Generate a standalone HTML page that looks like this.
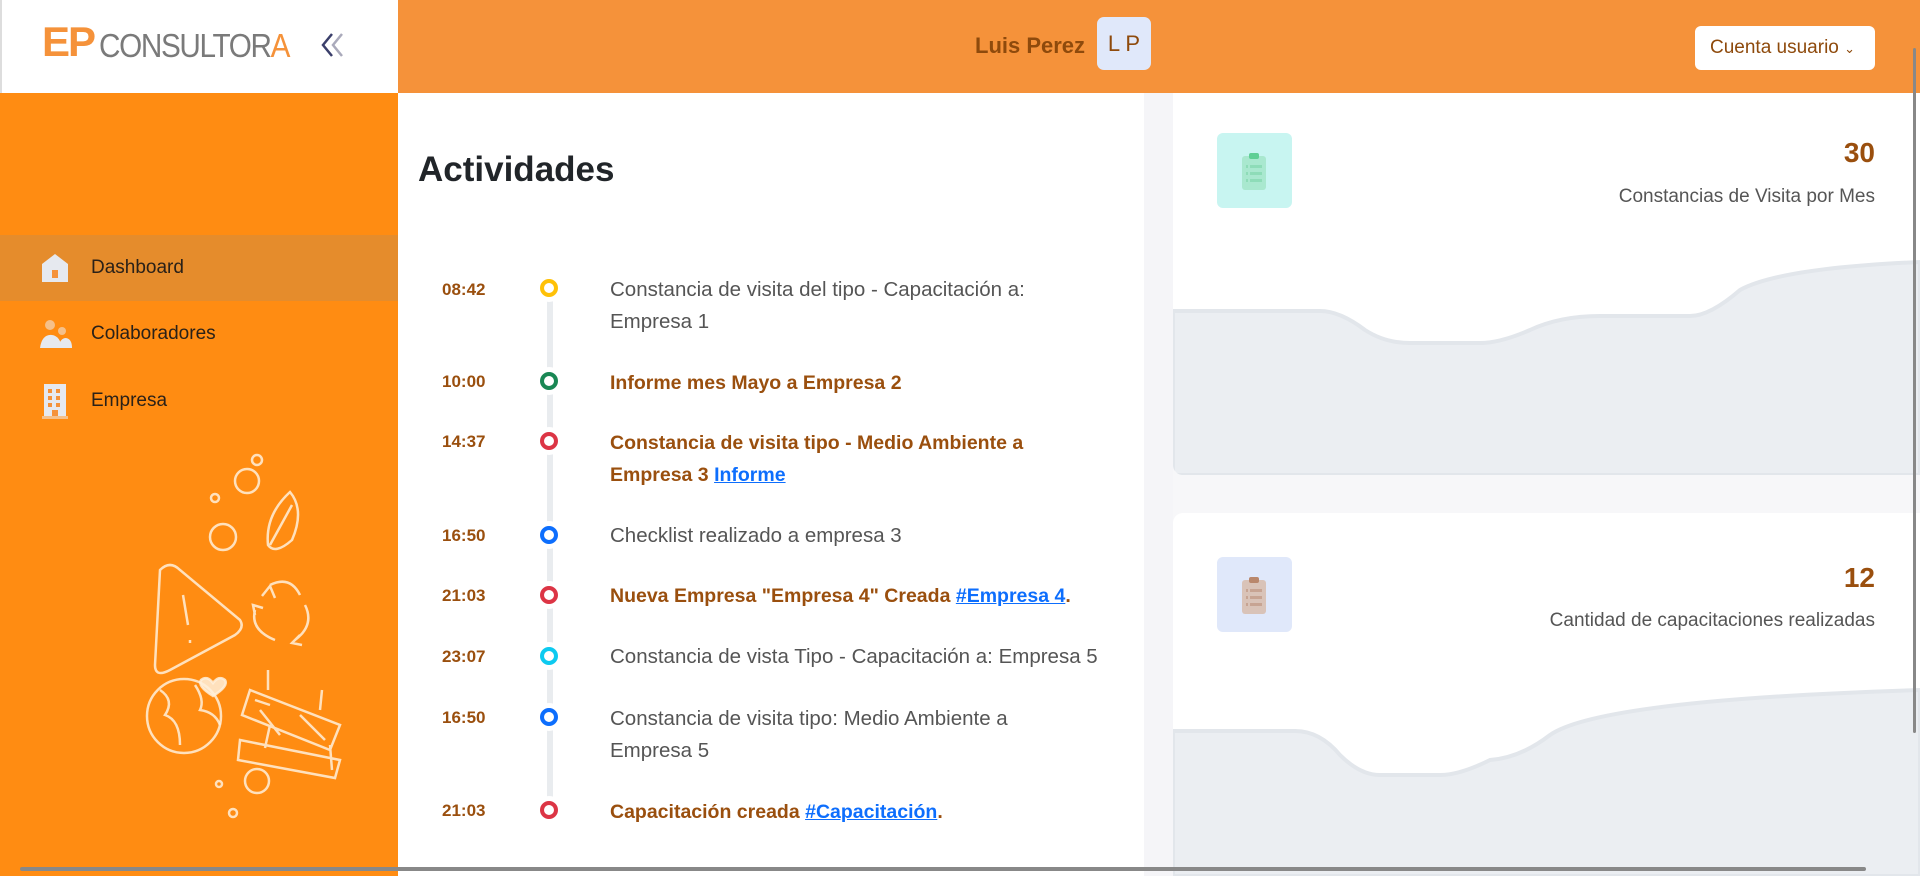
<!DOCTYPE html>
<html><head><meta charset="utf-8">
<style>
*{margin:0;padding:0;box-sizing:border-box}
body{width:1920px;height:876px;overflow:hidden;background:#f7f7f9;font-family:"Liberation Sans",sans-serif;position:relative}
.abs{position:absolute}
.side{left:0;top:93px;width:398px;height:783px;background:#FF8C12}
.logo{left:0;top:0;width:398px;height:93px;background:#fff;border-left:2px solid #ddd}
.hdr{left:398px;top:0;width:1522px;height:93px;background:#F5923A}
.nav{left:0;width:398px;height:66px;display:flex;align-items:center;color:#2a2118;font-size:19px}
.nav svg{position:absolute;left:38px}
.nav span{position:absolute;left:91px}
.main{left:398px;top:93px;width:746px;height:783px;background:#fff}
.gut{left:1144px;top:93px;width:29px;height:783px;background:#f5f5f8}
.card{left:1173px;width:747px;background:#fff;overflow:hidden}
.time{position:absolute;left:442px;font-size:17px;font-weight:bold;color:#9a4f0e}
.dot{position:absolute;left:540px;width:18px;height:18px;border-radius:50%;border:4px solid;background:#fff;box-shadow:0 0 0 5px #fff}
.txt{position:absolute;left:610px;font-size:20.5px;line-height:32px;color:#555;width:480px}
.b{color:#9a4f0e;font-weight:bold;font-size:19.5px}
a{color:#0d6efd;text-decoration:underline}
</style></head><body>
<div class="abs logo">
 <div class="abs" style="left:40px;top:18px;font-size:42px;font-weight:bold;color:#F5923A;letter-spacing:-2px">EP</div>
 <div class="abs" style="left:97px;top:27px;font-size:33px;color:#7a7a7a;letter-spacing:-1.5px;transform:scaleX(0.9);transform-origin:left">CONSULTOR<span style="color:#F5923A">A</span></div>
 <svg class="abs" style="left:318px;top:32px" width="30" height="26" viewBox="0 0 30 26"><path d="M12 2 L3 13 L12 24" stroke="#3b3f6b" stroke-width="2.5" fill="none"/><path d="M22 2 L13 13 L22 24" stroke="#aab" stroke-width="2.5" fill="none"/></svg>
</div>
<div class="abs hdr">
 <div class="abs" style="left:577px;top:33px;font-size:22px;font-weight:bold;color:#8e4a0c">Luis Perez</div>
 <div class="abs" style="left:699px;top:17px;width:54px;height:53px;border-radius:7px;background:#E0E8FA;color:#8e4a0c;font-size:22px;text-align:center;line-height:53px">L P</div>
 <div class="abs" style="left:1297px;top:26px;width:180px;height:44px;border-radius:6px;background:#fff;color:#8e4a0c;font-size:19px;line-height:44px;padding-left:15px">Cuenta usuario <span style="font-size:13px">&#8964;</span></div>
</div>
<div class="abs side">
 <div class="abs nav" style="top:142px;background:#E58C2C">
  <svg width="34" height="32" viewBox="0 0 34 32"><path d="M4 12 L17 2 L30 12 V30 H4Z" fill="#e6e9ef"/><rect x="14" y="18" width="6" height="8" fill="#F5923A"/></svg><span>Dashboard</span></div>
 <div class="abs nav" style="top:208px">
  <svg width="36" height="32" viewBox="0 0 36 32"><circle cx="12" cy="7" r="5" fill="#f5c08a"/><circle cx="24" cy="13" r="4" fill="#f5c08a"/><path d="M2 30 Q4 16 14 17 Q22 18 24 30Z" fill="#e6e9ef"/><path d="M20 30 Q22 20 28 20 Q34 21 34 30Z" fill="#e6e9ef"/></svg><span>Colaboradores</span></div>
 <div class="abs nav" style="top:275px">
  <svg width="34" height="36" viewBox="0 0 34 36"><rect x="6" y="1" width="22" height="33" fill="#e6e9ef"/><g fill="#F5923A"><rect x="10" y="6" width="4" height="4"/><rect x="18" y="6" width="4" height="4"/><rect x="10" y="13" width="4" height="4"/><rect x="18" y="13" width="4" height="4"/><rect x="10" y="20" width="4" height="4"/><rect x="18" y="20" width="4" height="4"/><rect x="14" y="27" width="6" height="7"/></g><rect x="4" y="33" width="26" height="3" fill="#f5c08a"/></svg><span>Empresa</span></div>
 <svg class="abs" style="left:0;top:0" width="398" height="783" viewBox="0 93 398 783" fill="none" stroke="rgba(255,240,220,0.85)" stroke-width="2.5">
  <circle cx="257" cy="460" r="5"/><circle cx="247" cy="481" r="12"/><circle cx="215" cy="498" r="4"/><circle cx="223" cy="537" r="13"/>
  <path d="M290 492 Q305 510 292 540 Q275 555 268 545 Q265 515 290 492Z M270 545 L292 505"/>
  <path d="M160 570 Q170 560 180 570 L240 620 Q245 628 235 635 L170 670 Q155 678 155 665Z M183 595 L188 625 M190 640 L190 643"/>
  <path d="M270 585 Q290 575 300 595 M305 605 Q315 625 295 640 M275 640 Q250 630 255 610 M262 596 l8 -10 l5 12 M300 635 l-8 8 l10 2 M255 615 l-2 -10 l10 3"/>
  <circle cx="184" cy="716" r="37"/><path d="M160 690 Q175 700 165 715 Q180 720 180 745 M195 685 Q205 700 200 710 Q215 712 220 725"/>
  <path d="M213 683 q-6 -8 -12 -3 q-4 6 12 16 q16 -10 12 -16 q-6 -5 -12 3Z" fill="rgba(255,240,220,0.85)"/>
  <path d="M250 690 L340 725 L330 750 L242 715Z M255 700 L270 705 M300 715 L325 740 M260 710 L280 735 M268 690 L268 670 M320 710 L322 690 M270 725 L265 748 M330 745 L332 770 M240 740 L340 760 L335 778 L238 760Z"/>
  <circle cx="257" cy="781" r="12"/><circle cx="219" cy="784" r="3"/><circle cx="233" cy="813" r="4"/>
 </svg>
</div>
<div class="abs main">
 <div class="abs" style="left:20px;top:57px;font-size:35px;font-weight:bold;color:#212529">Actividades</div>
</div>
<div class="abs" style="left:547px;top:290px;width:6px;height:510px;background:#e9ecef"></div>
<div class="time" style="top:280px">08:42</div><div class="dot" style="top:279px;border-color:#ffc107"></div>
<div class="txt" style="top:274px">Constancia de visita del tipo - Capacitación a: Empresa 1</div>
<div class="time" style="top:372px">10:00</div><div class="dot" style="top:372px;border-color:#198754"></div>
<div class="txt b" style="top:367px">Informe mes Mayo a Empresa 2</div>
<div class="time" style="top:432px">14:37</div><div class="dot" style="top:432px;border-color:#dc3545"></div>
<div class="txt b" style="top:427px">Constancia de visita tipo - Medio Ambiente a Empresa 3 <a style="font-weight:bold">Informe</a></div>
<div class="time" style="top:526px">16:50</div><div class="dot" style="top:526px;border-color:#0d6efd"></div>
<div class="txt" style="top:520px">Checklist realizado a empresa 3</div>
<div class="time" style="top:586px">21:03</div><div class="dot" style="top:586px;border-color:#dc3545"></div>
<div class="txt b" style="top:580px;width:540px">Nueva Empresa "Empresa 4" Creada <a>#Empresa 4</a>.</div>
<div class="time" style="top:647px">23:07</div><div class="dot" style="top:647px;border-color:#0dcaf0"></div>
<div class="txt" style="top:641px;width:540px">Constancia de vista Tipo - Capacitación a: Empresa 5</div>
<div class="time" style="top:708px">16:50</div><div class="dot" style="top:708px;border-color:#0d6efd"></div>
<div class="txt" style="top:703px">Constancia de visita tipo: Medio Ambiente a Empresa 5</div>
<div class="time" style="top:801px">21:03</div><div class="dot" style="top:801px;border-color:#dc3545"></div>
<div class="txt b" style="top:796px">Capacitación creada <a>#Capacitación</a>.</div>
<div class="abs gut"></div>
<div class="abs card" style="top:93px;height:382px;border-bottom-left-radius:10px">
 <div class="abs" style="left:44px;top:40px;width:75px;height:75px;border-radius:6px;background:#C8F5F1"></div>
 <svg class="abs" style="left:67px;top:58px" width="28" height="40" viewBox="0 0 28 40"><rect x="2" y="5" width="24" height="34" rx="3" fill="#a9e8cf"/><rect x="9" y="2" width="10" height="6" rx="2" fill="#5fcf95"/><g fill="#8edcb8"><rect x="6" y="14" width="2" height="3"/><rect x="10" y="14" width="12" height="3"/><rect x="6" y="21" width="2" height="3"/><rect x="10" y="21" width="12" height="3"/><rect x="6" y="28" width="2" height="3"/><rect x="10" y="28" width="12" height="3"/></g></svg>
 <div class="abs" style="right:45px;top:44px;font-size:28px;font-weight:bold;color:#9a4f0e">30</div>
 <div class="abs" style="right:45px;top:93px;font-size:19px;color:#555">Constancias de Visita por Mes</div>
 <svg class="abs" style="left:0;top:0" width="747" height="382" viewBox="1173 93 747 382"><path d="M1173 311 L1320 311 Q1340 311 1365 330 Q1385 343 1410 343 L1480 343 Q1500 343 1530 330 Q1560 316 1600 316 L1690 316 Q1710 316 1740 290 Q1780 268 1920 262 L1920 475 L1173 475Z" fill="#EBEEF2" stroke="#e2e6eb" stroke-width="4"/></svg>
</div>
<div class="abs card" style="top:513px;height:363px;border-top-left-radius:10px">
 <div class="abs" style="left:44px;top:44px;width:75px;height:75px;border-radius:6px;background:#E0E8FA"></div>
 <svg class="abs" style="left:67px;top:62px" width="28" height="40" viewBox="0 0 28 40"><rect x="2" y="5" width="24" height="34" rx="3" fill="#d9c3b8"/><rect x="9" y="2" width="10" height="6" rx="2" fill="#b9876c"/><g fill="#c7a493"><rect x="6" y="14" width="2" height="3"/><rect x="10" y="14" width="12" height="3"/><rect x="6" y="21" width="2" height="3"/><rect x="10" y="21" width="12" height="3"/><rect x="6" y="28" width="2" height="3"/><rect x="10" y="28" width="12" height="3"/></g></svg>
 <div class="abs" style="right:45px;top:49px;font-size:28px;font-weight:bold;color:#9a4f0e">12</div>
 <div class="abs" style="right:45px;top:97px;font-size:19px;color:#555">Cantidad de capacitaciones realizadas</div>
 <svg class="abs" style="left:0;top:0" width="747" height="363" viewBox="1173 513 747 363"><path d="M1173 731 L1295 731 Q1320 731 1340 755 Q1360 775 1380 775 L1440 775 Q1460 775 1490 760 Q1520 758 1550 735 Q1600 700 1920 690 L1920 876 L1173 876Z" fill="#EBEEF2" stroke="#e2e6eb" stroke-width="4"/></svg>
</div>
<div class="abs" style="left:1913px;top:48px;width:3px;height:685px;background:#888;border-radius:2px"></div>
<div class="abs" style="left:20px;top:867px;width:1846px;height:4px;background:#888;border-radius:2px"></div>
</body></html>
